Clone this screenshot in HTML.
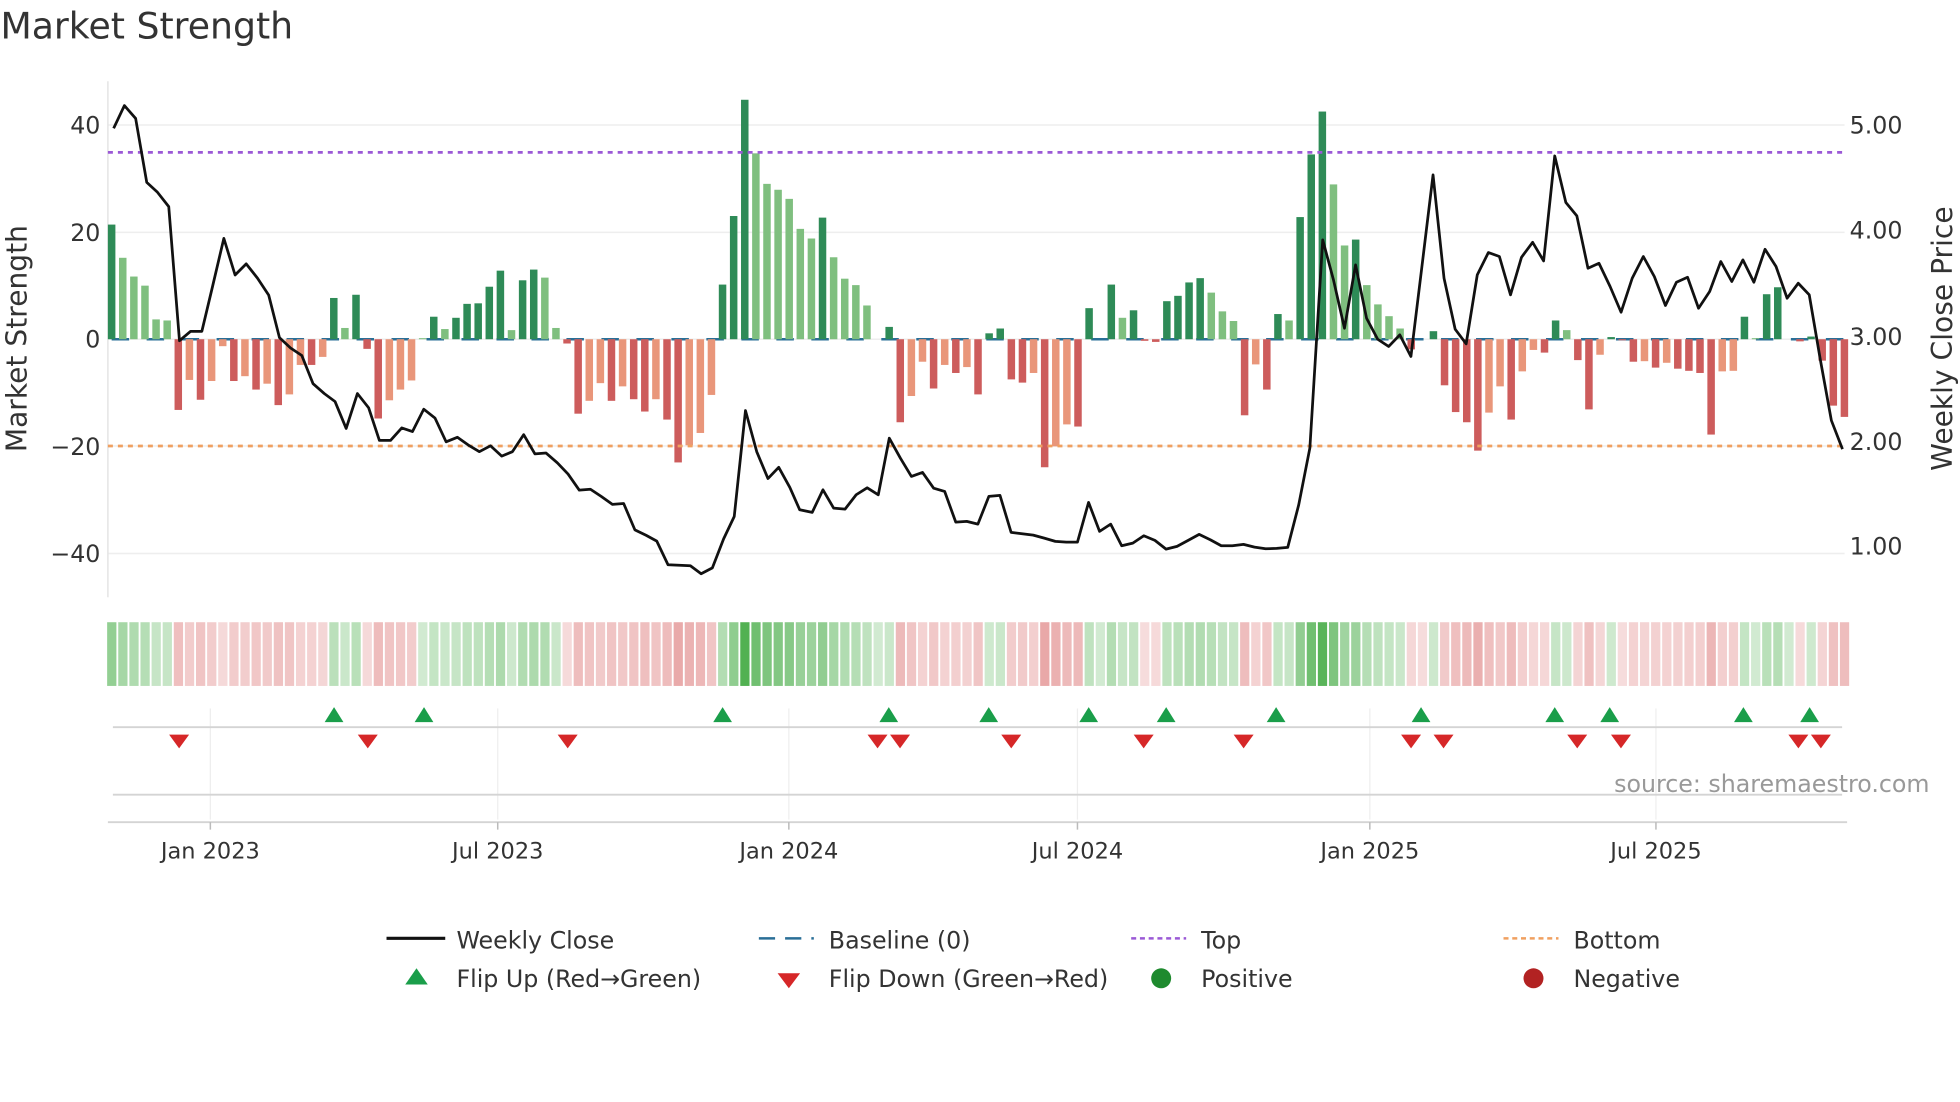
<!DOCTYPE html>
<html><head><meta charset="utf-8"><style>
html,body{margin:0;padding:0;background:#fff;width:1960px;height:1102px;overflow:hidden}
svg{display:block}
text{font-family:"DejaVu Sans","Liberation Sans",sans-serif;fill:#333}
</style></head><body>
<svg id="s" width="1960" height="1102" viewBox="0 0 1568 882" xmlns="http://www.w3.org/2000/svg">
<text x="0" y="31" font-size="29">Market Strength</text>
<!-- grid -->
<g stroke="#eeeeee" stroke-width="1.2">
<line x1="86" y1="100" x2="1476" y2="100"/><line x1="86" y1="186" x2="1476" y2="186"/>
<line x1="86" y1="271.5" x2="1476" y2="271.5"/><line x1="86" y1="357" x2="1476" y2="357"/>
<line x1="86" y1="443" x2="1476" y2="443"/>
</g>
<line x1="86" y1="65" x2="86" y2="478" stroke="#e4e4e4" stroke-width="1.2"/>
<g font-size="19" text-anchor="end">
<text x="80" y="107">40</text><text x="80" y="193">20</text><text x="80" y="278">0</text>
<text x="80" y="364">−20</text><text x="80" y="450">−40</text>
</g>
<g font-size="19">
<text x="1480" y="107">5.00</text><text x="1480" y="191">4.00</text><text x="1480" y="276">3.00</text>
<text x="1480" y="360">2.00</text><text x="1480" y="444">1.00</text>
</g>
<text transform="translate(21,271) rotate(-90)" font-size="22.5" text-anchor="middle">Market Strength</text>
<text transform="translate(1562,271) rotate(-90)" font-size="22.5" text-anchor="middle">Weekly Close Price</text>
<line x1="89" y1="271.5" x2="1476" y2="271.5" stroke="#2a6f97" stroke-width="2" stroke-dasharray="14 14"/>
<g id="bars"></g>
<line x1="86" y1="122" x2="1476" y2="122" stroke="#9b59d6" stroke-width="2.2" stroke-dasharray="4 4"/>
<line x1="86" y1="357" x2="1476" y2="357" stroke="#f0a060" stroke-width="2.2" stroke-dasharray="4 4"/>
<g id="line" fill="none" stroke="#111" stroke-width="2.2" stroke-linejoin="round"></g>
<g id="strip"></g>
<!-- marker rows -->
<g stroke="#eeeeee" stroke-width="1">
<line x1="168" y1="567" x2="168" y2="656"/><line x1="398" y1="567" x2="398" y2="656"/>
<line x1="631" y1="567" x2="631" y2="656"/><line x1="862" y1="567" x2="862" y2="656"/>
<line x1="1096" y1="567" x2="1096" y2="656"/><line x1="1325" y1="567" x2="1325" y2="656"/>
</g>
<line x1="90" y1="582" x2="1474" y2="582" stroke="#d4d4d4" stroke-width="1.5"/>
<line x1="90" y1="636" x2="1474" y2="636" stroke="#d4d4d4" stroke-width="1.5"/>
<line x1="86" y1="658" x2="1478" y2="658" stroke="#d4d4d4" stroke-width="1.5"/>
<g stroke="#bbb" stroke-width="1.2">
<line x1="168" y1="658" x2="168" y2="664"/><line x1="398" y1="658" x2="398" y2="664"/>
<line x1="631" y1="658" x2="631" y2="664"/><line x1="862" y1="658" x2="862" y2="664"/>
<line x1="1096" y1="658" x2="1096" y2="664"/><line x1="1325" y1="658" x2="1325" y2="664"/>
</g>
<g font-size="18" text-anchor="middle">
<text x="168" y="687">Jan 2023</text><text x="398" y="687">Jul 2023</text><text x="631" y="687">Jan 2024</text>
<text x="862" y="687">Jul 2024</text><text x="1096" y="687">Jan 2025</text><text x="1325" y="687">Jul 2025</text>
</g>
<g id="marks"></g>
<text x="1544" y="634" font-size="19" text-anchor="end" style="fill:#999">source: sharemaestro.com</text>
<!-- legend -->
<g font-size="19">
<line x1="309" y1="751" x2="356" y2="751" stroke="#111" stroke-width="2.5"/>
<text x="365" y="759">Weekly Close</text>
<line x1="607" y1="751" x2="651" y2="751" stroke="#2a6f97" stroke-width="2" stroke-dasharray="13 8"/>
<text x="663" y="759">Baseline (0)</text>
<line x1="905" y1="751" x2="949" y2="751" stroke="#9b59d6" stroke-width="2" stroke-dasharray="4 3"/>
<text x="961" y="759">Top</text>
<line x1="1203" y1="751" x2="1247" y2="751" stroke="#f0a060" stroke-width="2" stroke-dasharray="4 3"/>
<text x="1259" y="759">Bottom</text>
<polygon points="324,788 342,788 333,775" fill="#1a9e4a"/>
<text x="365" y="790">Flip Up (Red→Green)</text>
<polygon points="622,779 640,779 631,791" fill="#d62728"/>
<text x="663" y="790">Flip Down (Green→Red)</text>
<circle cx="929" cy="783" r="8" fill="#1e8a2e"/>
<text x="961" y="790">Positive</text>
<circle cx="1227" cy="783" r="8" fill="#b22222"/>
<text x="1259" y="790">Negative</text>
</g>
</svg>
<script>
var NS="http://www.w3.org/2000/svg";
function el(t,a,p){var e=document.createElementNS(NS,t);for(var k in a)e.setAttribute(k,a[k]);p.appendChild(e);return e;}
var B=[[21.4,1],[15.2,0],[11.7,0],[10,0],[3.7,0],[3.5,0],[-13.2,1],[-7.6,0],[-11.3,1],[-7.8,0],[-1.3,0],[-7.8,1],[-6.9,0],[-9.4,1],[-8.3,0],[-12.3,1],[-10.3,0],[-4.8,0],[-4.8,1],[-3.3,0],
[7.7,1],[2.1,0],[8.3,1],[-1.8,1],[-14.8,1],[-11.4,0],[-9.4,0],[-7.7,0],[0.2,0],[4.2,1],[1.9,0],[4,1],[6.6,1],[6.7,1],[9.8,1],[12.8,1],[1.7,0],[11,1],[13,1],[11.5,0],
[2.1,0],[-0.8,1],[-13.9,1],[-11.5,0],[-8.2,0],[-11.5,1],[-8.8,0],[-11.2,1],[-13.5,1],[-11.2,0],[-15,1],[-23,1],[-19.8,0],[-17.5,0],[-10.4,0],[10.2,1],[23,1],[44.7,1],[34.7,0],[29,0],
[27.9,0],[26.2,0],[20.6,0],[18.8,0],[22.7,1],[15.3,0],[11.3,0],[10.1,0],[6.3,0],[0,0],[2.3,1],[-15.5,1],[-10.6,0],[-4.2,0],[-9.2,1],[-4.8,0],[-6.3,1],[-5.2,0],[-10.3,1],[1.1,1],
[2,1],[-7.5,1],[-8.1,1],[-6.3,0],[-23.9,1],[-20,0],[-15.9,0],[-16.3,1],[5.8,1],[0,0],[10.2,1],[4,0],[5.4,1],[-0.3,1],[-0.5,1],[7.1,1],[8.1,1],[10.6,1],[11.4,1],[8.7,0],
[5.2,0],[3.4,0],[-14.2,1],[-4.7,0],[-9.4,1],[4.7,1],[3.5,0],[22.8,1],[34.5,1],[42.5,1],[28.9,0],[17.5,0],[18.6,1],[10.1,0],[6.5,0],[4.3,0],[2,0],[-1.9,1],[0,0],[1.5,1],
[-8.6,1],[-13.6,1],[-15.5,1],[-20.8,1],[-13.7,0],[-8.8,0],[-15,1],[-6,0],[-2,0],[-2.5,1],[3.5,1],[1.7,0],[-3.9,1],[-13.1,1],[-2.9,0],[0.4,1],[-0.2,1],[-4.2,1],[-4.1,0],[-5.3,1],
[-4.4,0],[-5.5,1],[-5.9,1],[-6.3,1],[-17.8,1],[-6,0],[-5.9,0],[4.2,1],[0.2,0],[8.4,1],[9.7,1],[0,0],[-0.4,1],[0.5,1],[-4,1],[-12.4,1],[-14.5,1]];
var bars=document.getElementById('bars'),strip=document.getElementById('strip');
var Z=271.5,K=4.2875,prev=1;
for(var i=0;i<B.length;i++){
 var v=B[i][0],d=B[i][1],x=89+i*8.89-3;
 var c=v>=0?(d?'#2e8b57':'#7fbf7f'):(d?'#cd5c5c':'#e9967a');
 var h=Math.abs(v)*K;
 if(h>0.3) el('rect',{x:x,y:v>=0?Z-h:Z,width:6,height:h,fill:c},bars);
 var sg=v>0.15?1:(v<-0.15?-1:prev);prev=sg;
 var a=0.22+0.6*Math.min(Math.abs(v)/45,1);
 el('rect',{x:x-0.6,y:498,width:7.4,height:51,fill:sg>0?'#2ca02c':'#d65f5f','fill-opacity':a.toFixed(2)},strip);
}
var z1=[[222,287],[243,236],[265,265],[287,408],[308,430],[330,462],[351,762],[373,741],[395,741],[416,640],[438,533],[460,615],[482,590],[504,622],[526,660],[547,755],[569,778],[591,795],[613,858],[635,880],[656,898],[678,958],[700,880],[722,912],[743,985],[765,985],[787,957],[808,965],[830,915],[852,935],[874,988],[896,978],[917,995],[939,1010],[961,997],[983,1020],[1004,1010],[1026,972],[1048,1015],[1070,1013],[1092,1035],[1113,1060],[1135,1096],[1157,1094],[1178,1110],[1200,1128],[1222,1126],[1244,1185],[1266,1197],[1287,1210],[1309,1263],[1331,1264],[1353,1265],[1374,1283],[1396,1270],[1418,1205],[1439,1155],[1461,918],[1483,1010],[1505,1070],[1526,1045],[1548,1090]];
var z2=[[55,1290],[90,1298],[120,1230],[150,1285],[182,1288],[213,1245],[244,1224],[275,1245],[306,1075],[337,1135],[368,1190],[399,1178],[430,1225],[461,1235],[492,1327],[523,1325],[554,1333],[585,1250],[616,1247],[647,1358],[678,1362],[709,1366],[740,1375],[771,1385],[802,1387],[833,1387],[864,1268],[895,1355],[926,1333],[957,1398],[988,1390],[1019,1368],[1050,1382],[1081,1408],[1112,1400],[1143,1382],[1174,1364],[1205,1380],[1236,1398],[1267,1398],[1298,1394],[1329,1402],[1360,1407],[1391,1406],[1422,1403],[1453,1275],[1484,1105]];
var z3=[[8,480],[38,600],[69,745],[100,555],[131,715],[162,778],[193,800],[224,765],[255,830],[286,560],[317,285],[348,595],[379,748],[410,792],[441,585],[472,518],[503,530],[534,645],[565,532],[596,487],[627,543],[658,228],[689,368],[720,408],[751,565],[782,550],[813,620],[844,697],[875,595],[906,530],[937,590],[968,677],[999,607],[1030,592],[1061,685],[1092,635],[1123,545],[1154,605],[1185,540],[1216,607],[1247,508],[1278,560],[1309,655],[1340,610],[1371,645],[1402,840],[1433,1022],[1464,1108]];
var pts=[];
z1.forEach(function(p){pts.push((p[0]/2.45).toFixed(1)+','+(p[1]/2.794).toFixed(1));});
z2.forEach(function(p){pts.push((624+p[0]/3.5).toFixed(1)+','+(64+p[1]/3.75).toFixed(1));});
z3.forEach(function(p){pts.push((1056+p[0]/3.5).toFixed(1)+','+(64+p[1]/3.75).toFixed(1));});
el('polyline',{points:pts.join(' ')},document.getElementById('line'));
var mk=document.getElementById('marks');
[267,339,578,711,791,871,933,1021,1137,1244,1288,1395,1448].forEach(function(x){
 el('polygon',{points:(x-7.5)+',578 '+(x+7.5)+',578 '+x+',566',fill:'#1a9e4a'},mk);});
[143,294,454,702,720,809,915,995,1129,1155,1262,1297,1439,1457].forEach(function(x){
 el('polygon',{points:(x-8)+',588 '+(x+8)+',588 '+x+',599',fill:'#d62728'},mk);});
</script>
</body></html>
